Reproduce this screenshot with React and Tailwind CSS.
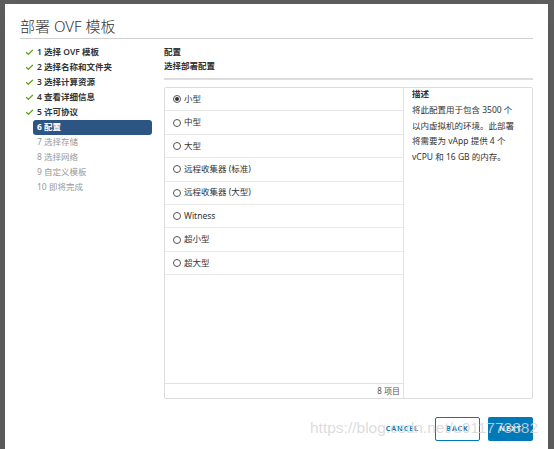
import { Check } from "lucide-react";

const steps = [
  { n: 1, label: "选择 OVF 模板", state: "done" },
  { n: 2, label: "选择名称和文件夹", state: "done" },
  { n: 3, label: "选择计算资源", state: "done" },
  { n: 4, label: "查看详细信息", state: "done" },
  { n: 5, label: "许可协议", state: "done" },
  { n: 6, label: "配置", state: "active" },
  { n: 7, label: "选择存储", state: "todo" },
  { n: 8, label: "选择网络", state: "todo" },
  { n: 9, label: "自定义模板", state: "todo" },
  { n: 10, label: "即将完成", state: "todo" },
];

const options = ["小型", "中型", "大型", "远程收集器 (标准)", "远程收集器 (大型)", "Witness", "超小型", "超大型"];

const font = { fontFamily: '"Noto Sans", "Noto Sans CJK SC", sans-serif' };

function Radio({ on }) {
  return (
    <span className="w-[8px] h-[8px] rounded-full border border-[#555] flex items-center justify-center shrink-0">
      {on && <span className="w-[4px] h-[4px] rounded-full bg-[#333]" />}
    </span>
  );
}

function App() {
  return (
    <div className="relative w-[554px] h-[449px] overflow-hidden bg-[#5d5d5d] pl-[5px] pt-[4px]" style={font}>
      <div className="w-[543px] h-[460px] bg-white shadow-lg px-[15px] flex flex-col">
        <div className="h-[35px] pt-[12px] border-b border-[#cfcfcf]">
          <h1 className="text-[15px] leading-[20px] text-[#333] font-light">部署 OVF 模板</h1>
        </div>

        <div className="flex mt-[6px]">
          <nav className="w-[132px] shrink-0 flex flex-col">
            {steps.map((s) => (
              <div
                key={s.n}
                className={
                  "h-[15px] flex items-center text-[8.5px] leading-none " +
                  (s.state === "active"
                    ? "ml-[13px] pl-[4px] rounded-[3px] bg-[#2d5584] text-white font-bold"
                    : s.state === "done"
                    ? "text-[#333] font-semibold"
                    : "text-[#999]")
                }
              >
                {s.state === "done" ? (
                  <Check size={9} strokeWidth={3.5} className="text-[#62a420] ml-[5px] mr-[3px] shrink-0" />
                ) : s.state === "todo" ? (
                  <span className="w-[17px] shrink-0" />
                ) : null}
                <span>
                  {s.n} {s.label}
                </span>
              </div>
            ))}
          </nav>

          <section className="flex-1 ml-[12px] flex flex-col">
            <div className="pb-[5px] border-b-2 border-[#ddd]">
              <div className="text-[8.5px] leading-[14px] text-[#333] font-semibold">配置</div>
              <div className="text-[8.5px] leading-[14px] text-[#333] font-bold">选择部署配置</div>
            </div>

            <div className="mt-[7px] h-[312px] border border-[#ddd] rounded-[2px] flex">
              <div className="w-[239px] border-r border-[#e2e2e2] flex flex-col">
                <div className="flex-1">
                  {options.map((o, i) => (
                    <div
                      key={o}
                      className="h-[23.4px] border-b border-[#e8e8e8] flex items-center gap-[3px] pl-[8px] text-[8.5px] text-[#333]"
                    >
                      <Radio on={i === 0} />
                      <span>{o}</span>
                    </div>
                  ))}
                </div>
                <div className="h-[15px] border-t border-[#e2e2e2] flex items-center justify-end pr-[3px] text-[8px] text-[#555]">
                  8 项目
                </div>
              </div>
              <div className="flex-1 pl-[8px] pr-[4px] text-[8.5px] text-[#333]">
                <div className="font-bold leading-[12px]">描述</div>
                <p className="mt-[2px] leading-[15.6px] whitespace-nowrap">
                  将此配置用于包含 3500 个
                  <br />
                  以内虚拟机的环境。此部署
                  <br />
                  将需要为 vApp 提供 4 个
                  <br />
                  vCPU 和 16 GB 的内存。
                </p>
              </div>
            </div>

            <div className="mt-[18px] flex justify-end items-center gap-[8px]">
              <button className="h-[24px] px-[8px] text-[7px] font-bold tracking-[1px] text-[#0079b8]">CANCEL</button>
              <button className="h-[24px] w-[45px] border border-[#0079b8] rounded-[2px] text-[7px] font-bold tracking-[1px] text-[#0079b8]">
                BACK
              </button>
              <button className="h-[24px] w-[45px] bg-[#0079b8] rounded-[2px] text-[7px] font-bold tracking-[1px] text-white">
                NEXT
              </button>
            </div>
          </section>
        </div>
      </div>

      <div
        className="absolute left-[310px] top-[419px] text-[15.5px] leading-[18px] text-[#d6d6d6]/85 pointer-events-none whitespace-nowrap"
        style={{ fontFamily: '"Liberation Sans", Arial, sans-serif' }}
      >
        https://blog.csdn.net/u011773882
      </div>
    </div>
  );
}

export default App;
